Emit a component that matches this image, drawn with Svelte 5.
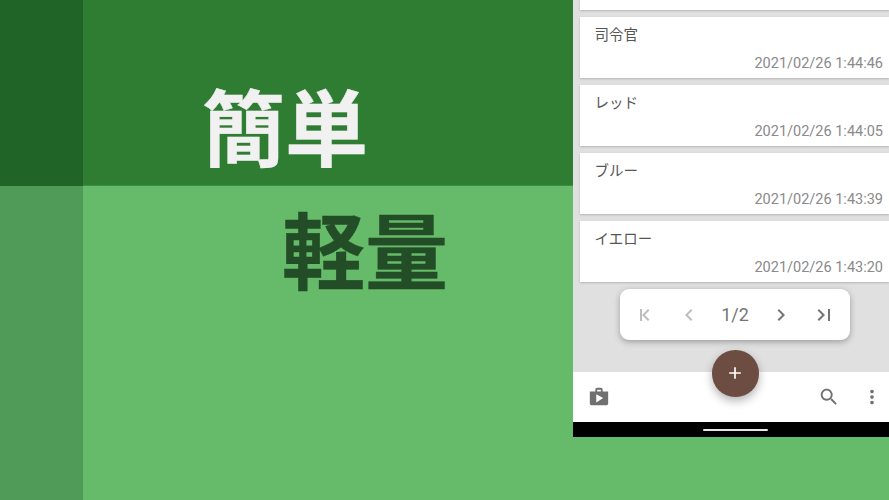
<script>
  const items = [
    { name: "司令官", date: "2021/02/26 1:44:46" },
    { name: "レッド", date: "2021/02/26 1:44:05" },
    { name: "ブルー", date: "2021/02/26 1:43:39" },
    { name: "イエロー", date: "2021/02/26 1:43:20" },
  ];
</script>

<div class="page">
  <div class="strip strip-top"></div>
  <div class="band band-top"><h1 class="light">簡単</h1></div>
  <div class="strip strip-bottom"></div>
  <div class="band band-bottom"><h1 class="dark">軽量</h1></div>

  <div class="phone">
    <div class="list">
      <div class="card stub"></div>
      {#each items as item}
        <div class="card">
          <div class="name">{item.name}</div>
          <div class="date">{item.date}</div>
        </div>
      {/each}
    </div>

    <div class="pager-wrap">
      <div class="pager">
        <svg class="off" viewBox="0 0 24 24"><path d="M15.41 16.59 10.83 12l4.58-4.59L14 6l-6 6 6 6zM6 6h2v12H6z" /></svg>
        <svg class="off" viewBox="0 0 24 24"><path d="M15.41 7.41 14 6l-6 6 6 6 1.41-1.41L10.83 12z" /></svg>
        <span class="count">1/2</span>
        <svg viewBox="0 0 24 24"><path d="M10 6 8.59 7.41 13.17 12l-4.58 4.59L10 18l6-6z" /></svg>
        <svg viewBox="0 0 24 24"><path d="M5.59 7.41 10.18 12l-4.59 4.59L7 18l6-6-6-6zM16 6h2v12h-2z" /></svg>
      </div>
    </div>

    <div class="appbar">
      <svg class="shop" viewBox="0 0 24 24"><path d="M16 6V4c0-1.11-.89-2-2-2h-4c-1.11 0-2 .89-2 2v2H2v13c0 1.11.89 2 2 2h16c1.11 0 2-.89 2-2V6h-6zm-6-2h4v2h-4V4zM9 18V9l7.5 4L9 18z" /></svg>
      <div class="grow"></div>
      <svg class="search" viewBox="0 0 24 24"><path d="M15.5 14h-.79l-.28-.27C15.41 12.59 16 11.11 16 9.5 16 5.91 13.09 3 9.5 3S3 5.91 3 9.5 5.91 16 9.5 16c1.61 0 3.09-.59 4.23-1.57l.27.28v.79l5 4.99L20.49 19l-4.99-5zm-6 0C7.01 14 5 11.99 5 9.5S7.01 5 9.5 5 14 7.01 14 9.5 11.99 14 9.5 14z" /></svg>
      <svg class="more" viewBox="0 0 24 24"><path d="M12 8c1.1 0 2-.9 2-2s-.9-2-2-2-2 .9-2 2 .9 2 2 2zm0 2c-1.1 0-2 .9-2 2s.9 2 2 2 2-.9 2-2-.9-2-2-2zm0 6c-1.1 0-2 .9-2 2s.9 2 2 2 2-.9 2-2-.9-2-2-2z" /></svg>
      <button class="fab" aria-label="add">
        <svg viewBox="0 0 24 24"><path d="M19 13h-6v6h-2v-6H5v-2h6V5h2v6h6v2z" /></svg>
      </button>
    </div>

    <div class="navbar"><span class="handle"></span></div>
  </div>
</div>

<style>
  :global(body) {
    margin: 0;
  }
  .page {
    width: 889px;
    height: 500px;
    overflow: hidden;
    display: grid;
    grid-template-columns: 83px 490px 316px;
    grid-template-rows: 186px 314px;
    font-family: Roboto, "Noto Sans CJK JP", sans-serif;
    background: #66bb6a;
  }
  .strip-top {
    background: #206428;
  }
  .strip-bottom {
    background: #4f9b57;
  }
  .band-top {
    background: #2e7d32;
    border-bottom: 1px solid #3f8c44;
    box-sizing: border-box;
  }
  .band-bottom {
    background: #66bb6a;
  }
  h1 {
    margin: 0;
    font-family: "Noto Sans CJK JP", sans-serif;
    font-size: 83px;
    font-weight: 700;
    line-height: 83px;
    -webkit-text-stroke: 0.4px currentColor;
  }
  .light {
    color: #f1f1f1;
    padding: 83px 0 0 119px;
  }
  .dark {
    color: #234d26;
    padding: 20px 0 0 199px;
  }
  .phone {
    grid-column: 3;
    grid-row: 1 / 3;
    height: 437px;
    background: #e0e0e0;
    display: flex;
    flex-direction: column;
    padding-left: 7px;
    box-sizing: border-box;
    position: relative;
  }
  .list {
    display: flex;
    flex-direction: column;
    gap: 7px;
    margin-top: -51px;
  }
  .card {
    height: 61px;
    background: #fff;
    box-shadow: 0 1px 2px rgba(0, 0, 0, 0.2);
    box-sizing: border-box;
    padding: 10px 6px 0 14.5px;
    font-size: 14.5px;
  }
  .name {
    line-height: 17px;
    color: #555;
  }
  .date {
    margin-top: 11px;
    text-align: right;
    line-height: 17px;
    color: #8a8a8a;
  }
  .pager-wrap {
    display: flex;
    justify-content: center;
    margin-top: 7px;
  }
  .pager {
    width: 230px;
    height: 51px;
    background: #fff;
    border-radius: 9px;
    box-shadow: 0 2px 6px rgba(0, 0, 0, 0.3);
    display: flex;
    align-items: center;
    justify-content: space-between;
    padding: 0 13px 0 14px;
    box-sizing: border-box;
  }
  .pager svg {
    width: 24px;
    height: 24px;
    fill: #757575;
  }
  .pager svg.off {
    fill: #bdbdbd;
  }
  .count {
    font-size: 18px;
    color: #757575;
  }
  .appbar {
    margin: 32px 0 0 -7px;
    height: 50px;
    background: #fff;
    display: flex;
    align-items: center;
    position: relative;
    padding-left: 15px;
  }
  .shop {
    width: 22px;
    height: 22px;
    fill: #707070;
  }
  .grow {
    flex: 1;
  }
  .search {
    width: 22px;
    height: 22px;
    fill: #707070;
    margin-right: 21px;
  }
  .more {
    width: 22px;
    height: 22px;
    fill: #707070;
    margin-right: 6px;
  }
  .fab {
    position: absolute;
    left: 139px;
    top: -22px;
    width: 46.5px;
    height: 46.5px;
    border: 0;
    padding: 0;
    border-radius: 50%;
    background: #6d4c41;
    box-shadow: 0 4px 10px rgba(0, 0, 0, 0.3);
    display: flex;
    align-items: center;
    justify-content: center;
  }
  .fab svg {
    width: 20px;
    height: 20px;
    fill: #fff;
  }
  .navbar {
    margin-left: -7px;
    padding-left: 9px;
    height: 15px;
    background: #000;
    display: flex;
    justify-content: center;
    align-items: center;
  }
  .handle {
    width: 65px;
    height: 2px;
    background: #e8e8e8;
    border-radius: 1px;
  }
</style>
